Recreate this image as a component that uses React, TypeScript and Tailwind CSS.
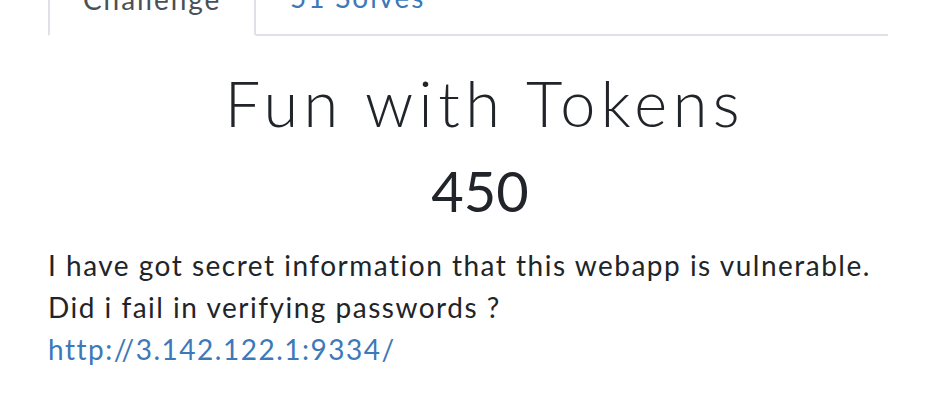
export default function App() {
  return (
    <div className="w-[948px] h-[412px] overflow-hidden bg-white text-[#212529] font-['Lato','Liberation_Sans',sans-serif]">
      <ul className="-mt-[37px] ml-[48px] w-[840px] flex border-b-2 border-[#dee2e6] list-none p-0 text-[28px] leading-[42px] tracking-[1.9px]">
        <li className="-mb-[2px]">
          <span className="block w-[208px] h-[73px] pt-[13px] pl-[33px] border-2 border-[#dee2e6] border-b-white bg-white rounded-t-md text-[#495057]">
            Challenge
          </span>
        </li>
        <li>
          <span className="block h-[71px] pt-[13px] pl-[34px] text-[#3d79b8]">51 Solves</span>
        </li>
      </ul>

      <div className="ml-[48px] w-[868px]">
        <h1 className="mt-[29px] text-center text-[63px] leading-[1.2] font-light tracking-[5.5px] pl-[6px]">
          Fun with Tokens
        </h1>
        <h3 className="mt-[16px] text-center text-[56px] leading-[1.2] font-normal pr-[4px]">450</h3>
        <p className="mt-[20px] text-[28px] leading-[42px] tracking-[1.5px]">
          I have got secret information that this webapp is vulnerable.
          <br />
          Did i fail in verifying passwords ?
          <br />
          <a href="#" className="text-[#3d79b8]">
            http://3.142.122.1:9334/
          </a>
        </p>
      </div>
    </div>
  );
}
